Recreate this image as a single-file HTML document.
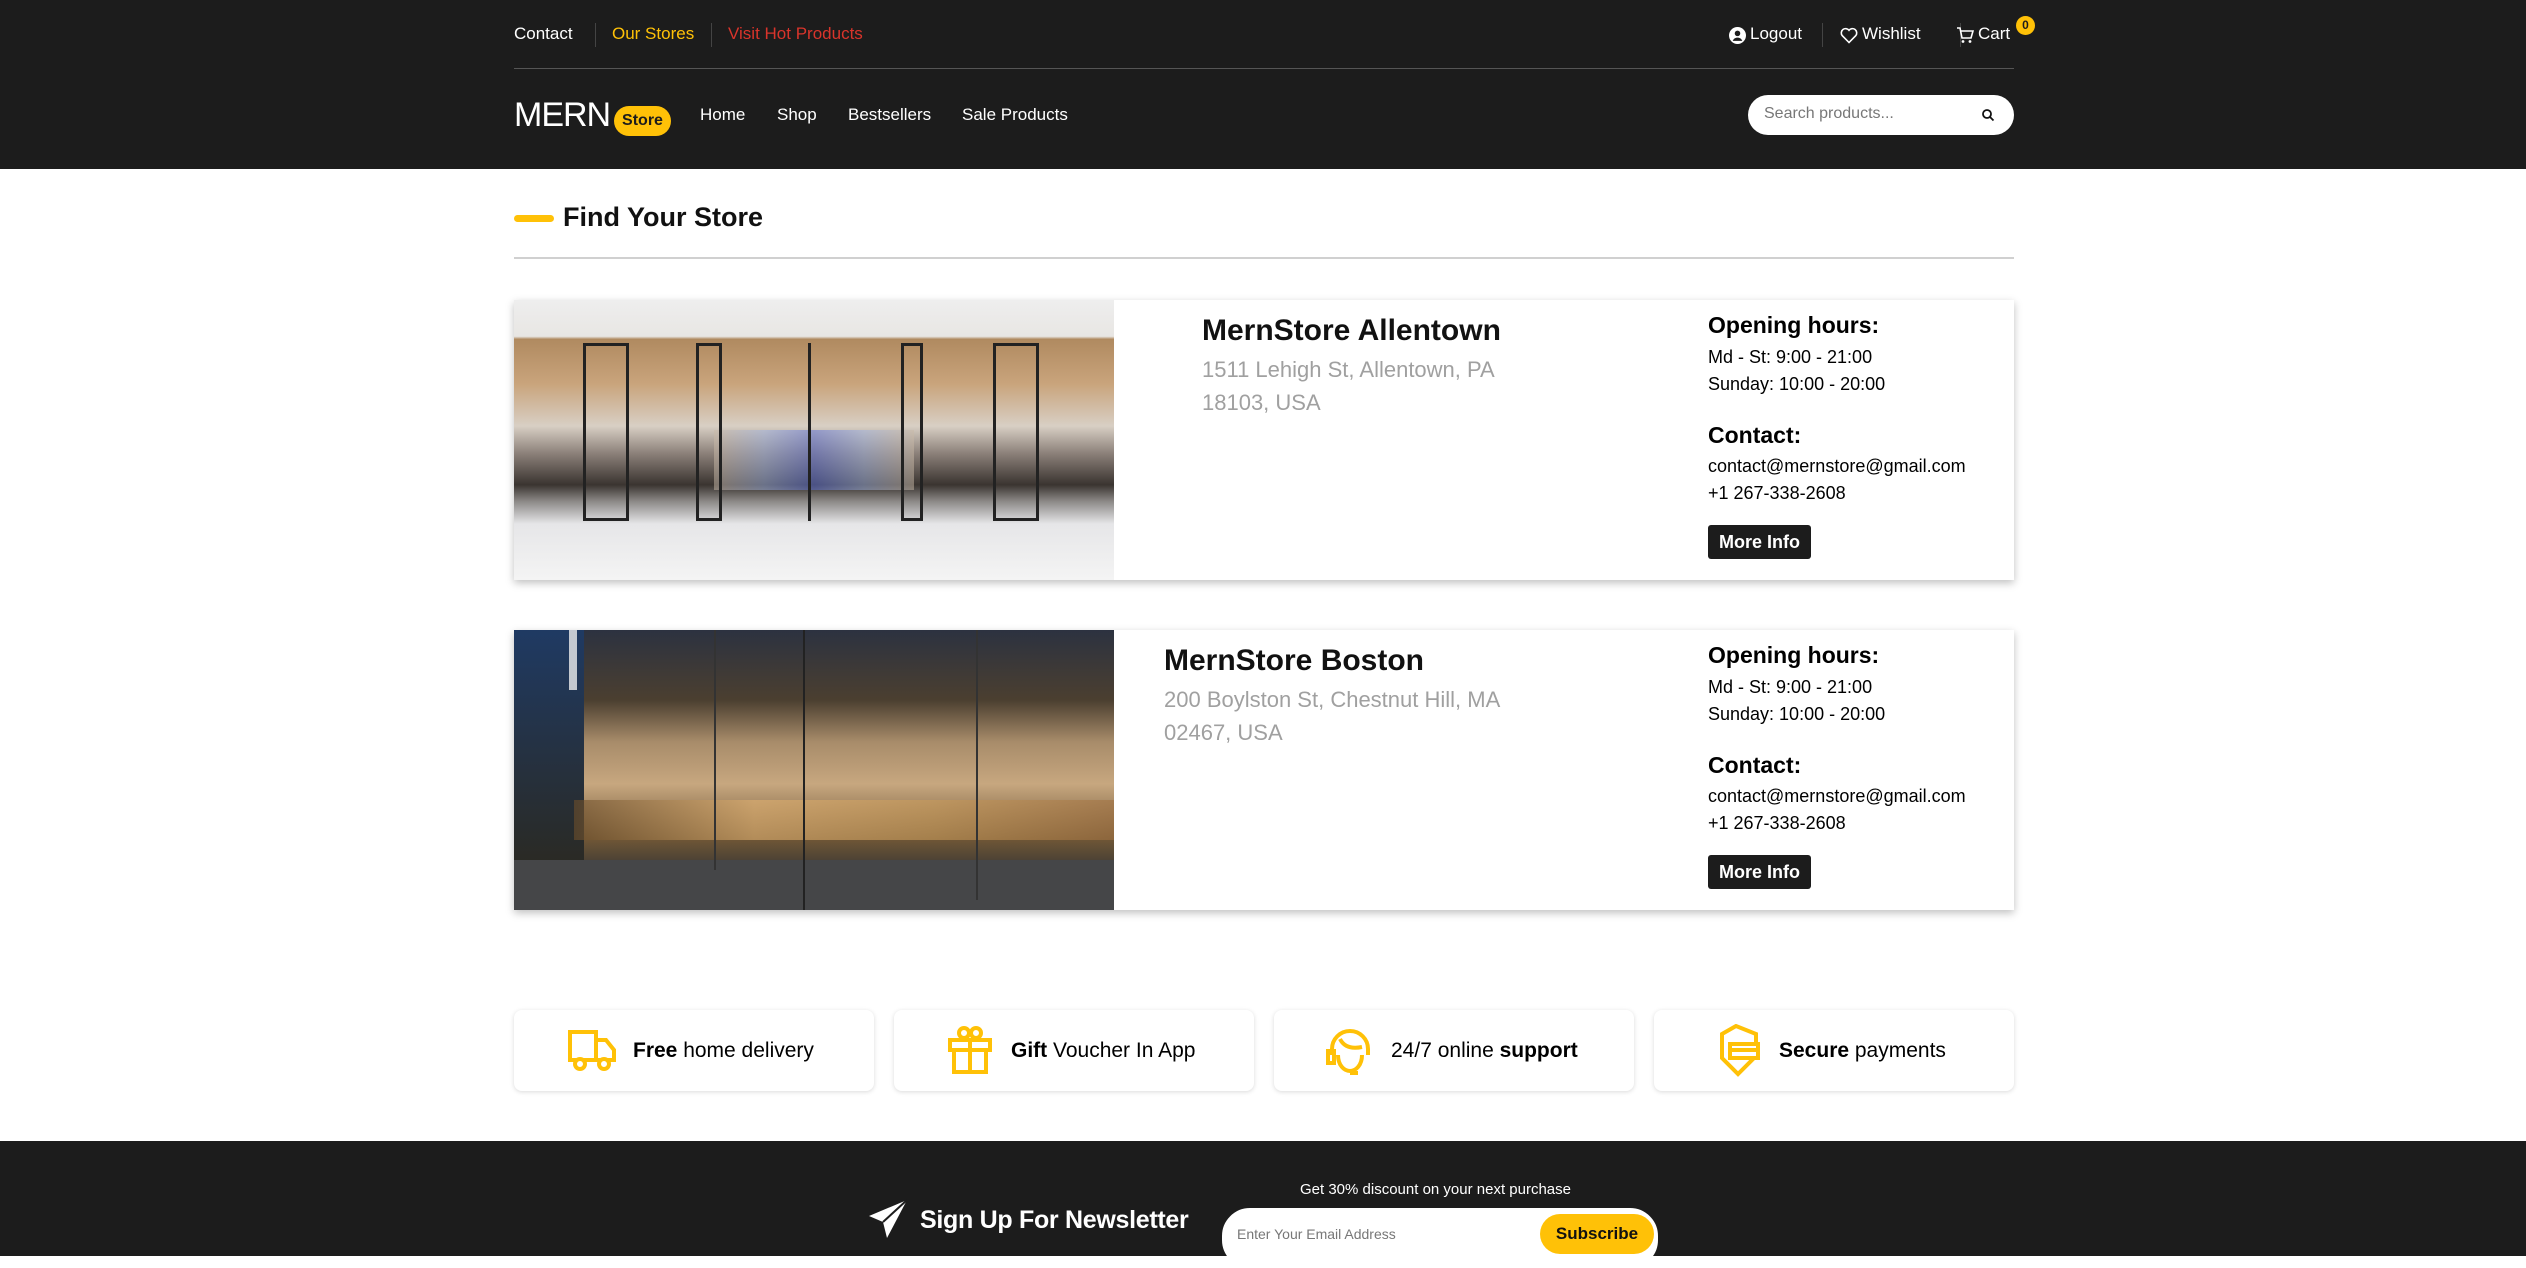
<!DOCTYPE html>
<html><head><meta charset="utf-8"><style>
*{box-sizing:border-box;margin:0;padding:0}
body{width:2526px;height:1256px;overflow:hidden;background:#fff;font-family:"Liberation Sans",sans-serif;color:#000;position:relative}
.abs{position:absolute}
.hdr{position:absolute;left:0;top:0;width:2526px;height:169px;background:#1c1c1c}
.t{position:absolute;white-space:nowrap}
.card{position:absolute;left:514px;width:1500px;height:280px;background:#fff;box-shadow:0 3px 8px rgba(0,0,0,.25)}
.img{position:absolute;left:0;top:0;width:600px;height:280px;overflow:hidden}
.btn{position:absolute;left:1194px;width:103px;height:34px;background:#1c1c1c;color:#fff;font-weight:bold;font-size:18px;line-height:34px;text-align:center;border-radius:3px}
.feat{position:absolute;top:1010px;width:360px;height:81px;background:#fff;border-radius:8px;box-shadow:0 1px 5px rgba(0,0,0,.15);font-size:21px;line-height:81px}
.sep{position:absolute;top:23px;width:1px;height:24px;background:#444}
</style></head><body>
<div class="hdr">
 <div class="t" style="left:514px;top:24px;font-size:17px;color:#fff">Contact</div>
 <div class="sep" style="left:595px"></div>
 <div class="t" style="left:612px;top:24px;font-size:17px;color:#ffc107">Our Stores</div>
 <div class="sep" style="left:711px"></div>
 <div class="t" style="left:728px;top:24px;font-size:17px;color:#d9342b">Visit Hot Products</div>
 <div class="sep" style="left:1822px"></div><div class="sep" style="left:1960px"></div>
 <svg class="abs" style="left:1729px;top:27px" width="17" height="17" viewBox="0 0 16 16"><circle cx="8" cy="8" r="8" fill="#fff"/><circle cx="8" cy="6" r="2.6" fill="#1c1c1c"/><path d="M3.5 13c1-2.4 3-3 4.5-3s3.5.6 4.5 3" fill="#1c1c1c"/></svg>
 <div class="t" style="left:1750px;top:24px;font-size:17px;color:#fff">Logout</div>
 <svg class="abs" style="left:1840px;top:27px" width="18" height="17" viewBox="0 0 18 17"><path d="M9 15.5 2.2 8.6A4 4 0 0 1 9 3.3a4 4 0 0 1 6.8 5.3Z" fill="none" stroke="#fff" stroke-width="1.6"/></svg>
 <div class="t" style="left:1862px;top:24px;font-size:17px;color:#fff">Wishlist</div>
 <svg class="abs" style="left:1956px;top:26px" width="18" height="18" viewBox="0 0 18 18"><path d="M1 2h3l2 10h9l2-7H5" fill="none" stroke="#fff" stroke-width="1.6"/><circle cx="7" cy="15.5" r="1.4" fill="#fff"/><circle cx="14" cy="15.5" r="1.4" fill="#fff"/></svg>
 <div class="t" style="left:1978px;top:24px;font-size:17px;color:#fff">Cart</div>
 <div class="abs" style="left:2016px;top:16px;width:19px;height:19px;border-radius:50%;background:#ffc107;color:#1c1c1c;font-size:12px;font-weight:bold;text-align:center;line-height:19px">0</div>
 <div class="abs" style="left:514px;top:68px;width:1500px;height:1px;background:#555"></div>
 <div class="t" style="left:514px;top:96px;font-size:34px;color:#fff;letter-spacing:-1px">MERN</div>
 <div class="abs" style="left:614px;top:106px;width:57px;height:30px;border-radius:15px;background:#ffc107;color:#1c1c1c;font-size:16px;font-weight:bold;text-align:center;line-height:30px">Store</div>
 <div class="t" style="left:700px;top:105px;font-size:17px;color:#fff">Home</div>
 <div class="t" style="left:777px;top:105px;font-size:17px;color:#fff">Shop</div>
 <div class="t" style="left:848px;top:105px;font-size:17px;color:#fff">Bestsellers</div>
 <div class="t" style="left:962px;top:105px;font-size:17px;color:#fff">Sale Products</div>
 <div class="abs" style="left:1748px;top:95px;width:266px;height:40px;border-radius:20px;background:#fff"></div>
 <div class="t" style="left:1764px;top:105px;font-size:16px;color:#777">Search products...</div>
 <svg class="abs" style="left:1981px;top:108px" width="14" height="14" viewBox="0 0 14 14"><circle cx="6" cy="6" r="4" fill="none" stroke="#111" stroke-width="1.8"/><path d="M9 9l3.5 3.5" stroke="#111" stroke-width="1.8"/></svg>
</div>

<div class="abs" style="left:514px;top:215px;width:40px;height:7px;border-radius:4px;background:#ffc107"></div>
<div class="t" style="left:563px;top:202px;font-size:27px;font-weight:bold;color:#111">Find Your Store</div>
<div class="abs" style="left:514px;top:257px;width:1500px;height:2px;background:#d0d0d0"></div>

<div class="card" style="top:300px">
 <div class="img" style="background:linear-gradient(180deg,#eee 0,#e8e6e3 13%,#b08a60 14%,#c9a47c 30%,#d8cfc4 45%,#8a7f78 55%,#3a3430 66%,#8d8a88 72%,#e6e6e8 80%,#f4f4f4 100%)">
  <div class="abs" style="left:200px;top:130px;width:200px;height:60px;background:linear-gradient(90deg,#c9b9a6,#9cb0e0,#5b6fd8,#9cb0e0,#c9b9a6);opacity:.5"></div>
  <div class="abs" style="left:69px;top:43px;width:46px;height:178px;border:3px solid #222"></div>
  <div class="abs" style="left:182px;top:43px;width:26px;height:178px;border:3px solid #222"></div>
  <div class="abs" style="left:294px;top:43px;width:3px;height:178px;background:#222"></div>
  <div class="abs" style="left:387px;top:43px;width:22px;height:178px;border:3px solid #222"></div>
  <div class="abs" style="left:479px;top:43px;width:46px;height:178px;border:3px solid #222"></div>
 </div>
 <div class="t" style="left:688px;top:14px;font-size:30px;font-weight:bold;color:#111">MernStore Allentown</div>
 <div class="t" style="left:688px;top:53px;font-size:22px;color:#a0a0a0;line-height:33px">1511 Lehigh St, Allentown, PA<br>18103, USA</div>
 <div class="t" style="left:1194px;top:12px;font-size:23px;font-weight:bold">Opening hours:</div>
 <div class="t" style="left:1194px;top:44px;font-size:18px;line-height:27px">Md - St: 9:00 - 21:00<br>Sunday: 10:00 - 20:00</div>
 <div class="t" style="left:1194px;top:122px;font-size:23px;font-weight:bold">Contact:</div>
 <div class="t" style="left:1194px;top:153px;font-size:18px;line-height:27px">contact@mernstore@gmail.com<br>+1 267-338-2608</div>
 <div class="btn" style="top:225px">More Info</div>
</div>

<div class="card" style="top:630px">
 <div class="img" style="background:linear-gradient(180deg,#2c3240 0,#4b3f30 25%,#a88c6a 40%,#c7a77f 55%,#6e5636 75%,#3c3834 86%,#4a4a4c 100%)">
  <div class="abs" style="left:0;top:0;width:70px;height:230px;background:linear-gradient(180deg,#1f3a63,#2a2a25)"></div>
  <div class="abs" style="left:55px;top:0;width:8px;height:60px;background:#eee;opacity:.8"></div>
  <div class="abs" style="left:60px;top:170px;width:540px;height:40px;background:linear-gradient(90deg,#6d4e2a,#e0b070,#c89a5a,#a07040);opacity:.6"></div>
  <div class="abs" style="left:0;top:230px;width:600px;height:50px;background:#454648"></div>
  <div class="abs" style="left:289px;top:0;width:2px;height:280px;background:#222"></div>
  <div class="abs" style="left:200px;top:0;width:2px;height:240px;background:#333"></div>
  <div class="abs" style="left:462px;top:0;width:2px;height:270px;background:#333"></div>
 </div>
 <div class="t" style="left:650px;top:14px;font-size:30px;font-weight:bold;color:#111">MernStore Boston</div>
 <div class="t" style="left:650px;top:53px;font-size:22px;color:#a0a0a0;line-height:33px">200 Boylston St, Chestnut Hill, MA<br>02467, USA</div>
 <div class="t" style="left:1194px;top:12px;font-size:23px;font-weight:bold">Opening hours:</div>
 <div class="t" style="left:1194px;top:44px;font-size:18px;line-height:27px">Md - St: 9:00 - 21:00<br>Sunday: 10:00 - 20:00</div>
 <div class="t" style="left:1194px;top:122px;font-size:23px;font-weight:bold">Contact:</div>
 <div class="t" style="left:1194px;top:153px;font-size:18px;line-height:27px">contact@mernstore@gmail.com<br>+1 267-338-2608</div>
 <div class="btn" style="top:225px">More Info</div>
</div>

<div class="feat" style="left:514px">
 <svg class="abs" style="left:52px;top:18px" width="52" height="44" viewBox="0 0 52 44"><g fill="none" stroke="#ffc107" stroke-width="4"><rect x="4" y="4" width="26" height="28"/><path d="M30 12h10l8 10v10H30"/><circle cx="14" cy="36" r="5" fill="#fff"/><circle cx="38" cy="36" r="5" fill="#fff"/></g></svg>
 <div class="t" style="left:119px;top:0"><b>Free</b> home delivery</div></div>
<div class="feat" style="left:894px">
 <svg class="abs" style="left:52px;top:14px" width="48" height="52" viewBox="0 0 48 52"><g fill="none" stroke="#ffc107" stroke-width="4"><rect x="4" y="16" width="40" height="10"/><rect x="8" y="26" width="32" height="22"/><path d="M24 16v32"/><circle cx="18" cy="9" r="5"/><circle cx="30" cy="9" r="5"/></g></svg>
 <div class="t" style="left:117px;top:0"><b>Gift</b> Voucher In App</div></div>
<div class="feat" style="left:1274px">
 <svg class="abs" style="left:50px;top:15px" width="52" height="52" viewBox="0 0 52 52"><g fill="none" stroke="#ffc107" stroke-width="4"><path d="M8 30v-6a18 18 0 0 1 36 0v6"/><path d="M16 14c4 8 12 10 22 8"/><path d="M14 30c0 10 6 16 12 16s12-6 12-16"/><rect x="4" y="26" width="6" height="12"/><path d="M26 48h8"/></g></svg>
 <div class="t" style="left:117px;top:0">24/7 online <b>support</b></div></div>
<div class="feat" style="left:1654px">
 <svg class="abs" style="left:62px;top:14px" width="48" height="54" viewBox="0 0 48 54"><g fill="none" stroke="#ffc107" stroke-width="4"><path d="M6 10 20 2l20 8v22L22 50 6 34Z"/><rect x="14" y="20" width="28" height="14" fill="#fff"/><path d="M14 26h28"/></g></svg>
 <div class="t" style="left:125px;top:0"><b>Secure</b> payments</div></div>

<div class="abs" style="left:0;top:1141px;width:2526px;height:115px;background:#1c1c1c"></div>
<div class="t" style="left:1300px;top:1181px;font-size:15px;color:#fff">Get 30% discount on your next purchase</div>
<svg class="abs" style="left:867px;top:1198px" width="42" height="42" viewBox="0 0 42 42"><path d="M40 2 2 18l14 6 4 16Z" fill="#fff"/><path d="M40 2 16 24" stroke="#1c1c1c" stroke-width="2"/></svg>
<div class="t" style="left:920px;top:1206px;font-size:25px;font-weight:bold;color:#fff;letter-spacing:-0.3px">Sign Up For Newsletter</div>
<div class="abs" style="left:1222px;top:1208px;width:436px;height:60px;border-radius:28px;background:#fff;border:3px solid #fff"></div>
<div class="t" style="left:1237px;top:1226px;font-size:14px;color:#777">Enter Your Email Address</div>
<div class="abs" style="left:1540px;top:1214px;width:114px;height:40px;border-radius:20px;background:#ffc107;color:#111;font-weight:bold;font-size:17px;text-align:center;line-height:40px">Subscribe</div>
</body></html>
